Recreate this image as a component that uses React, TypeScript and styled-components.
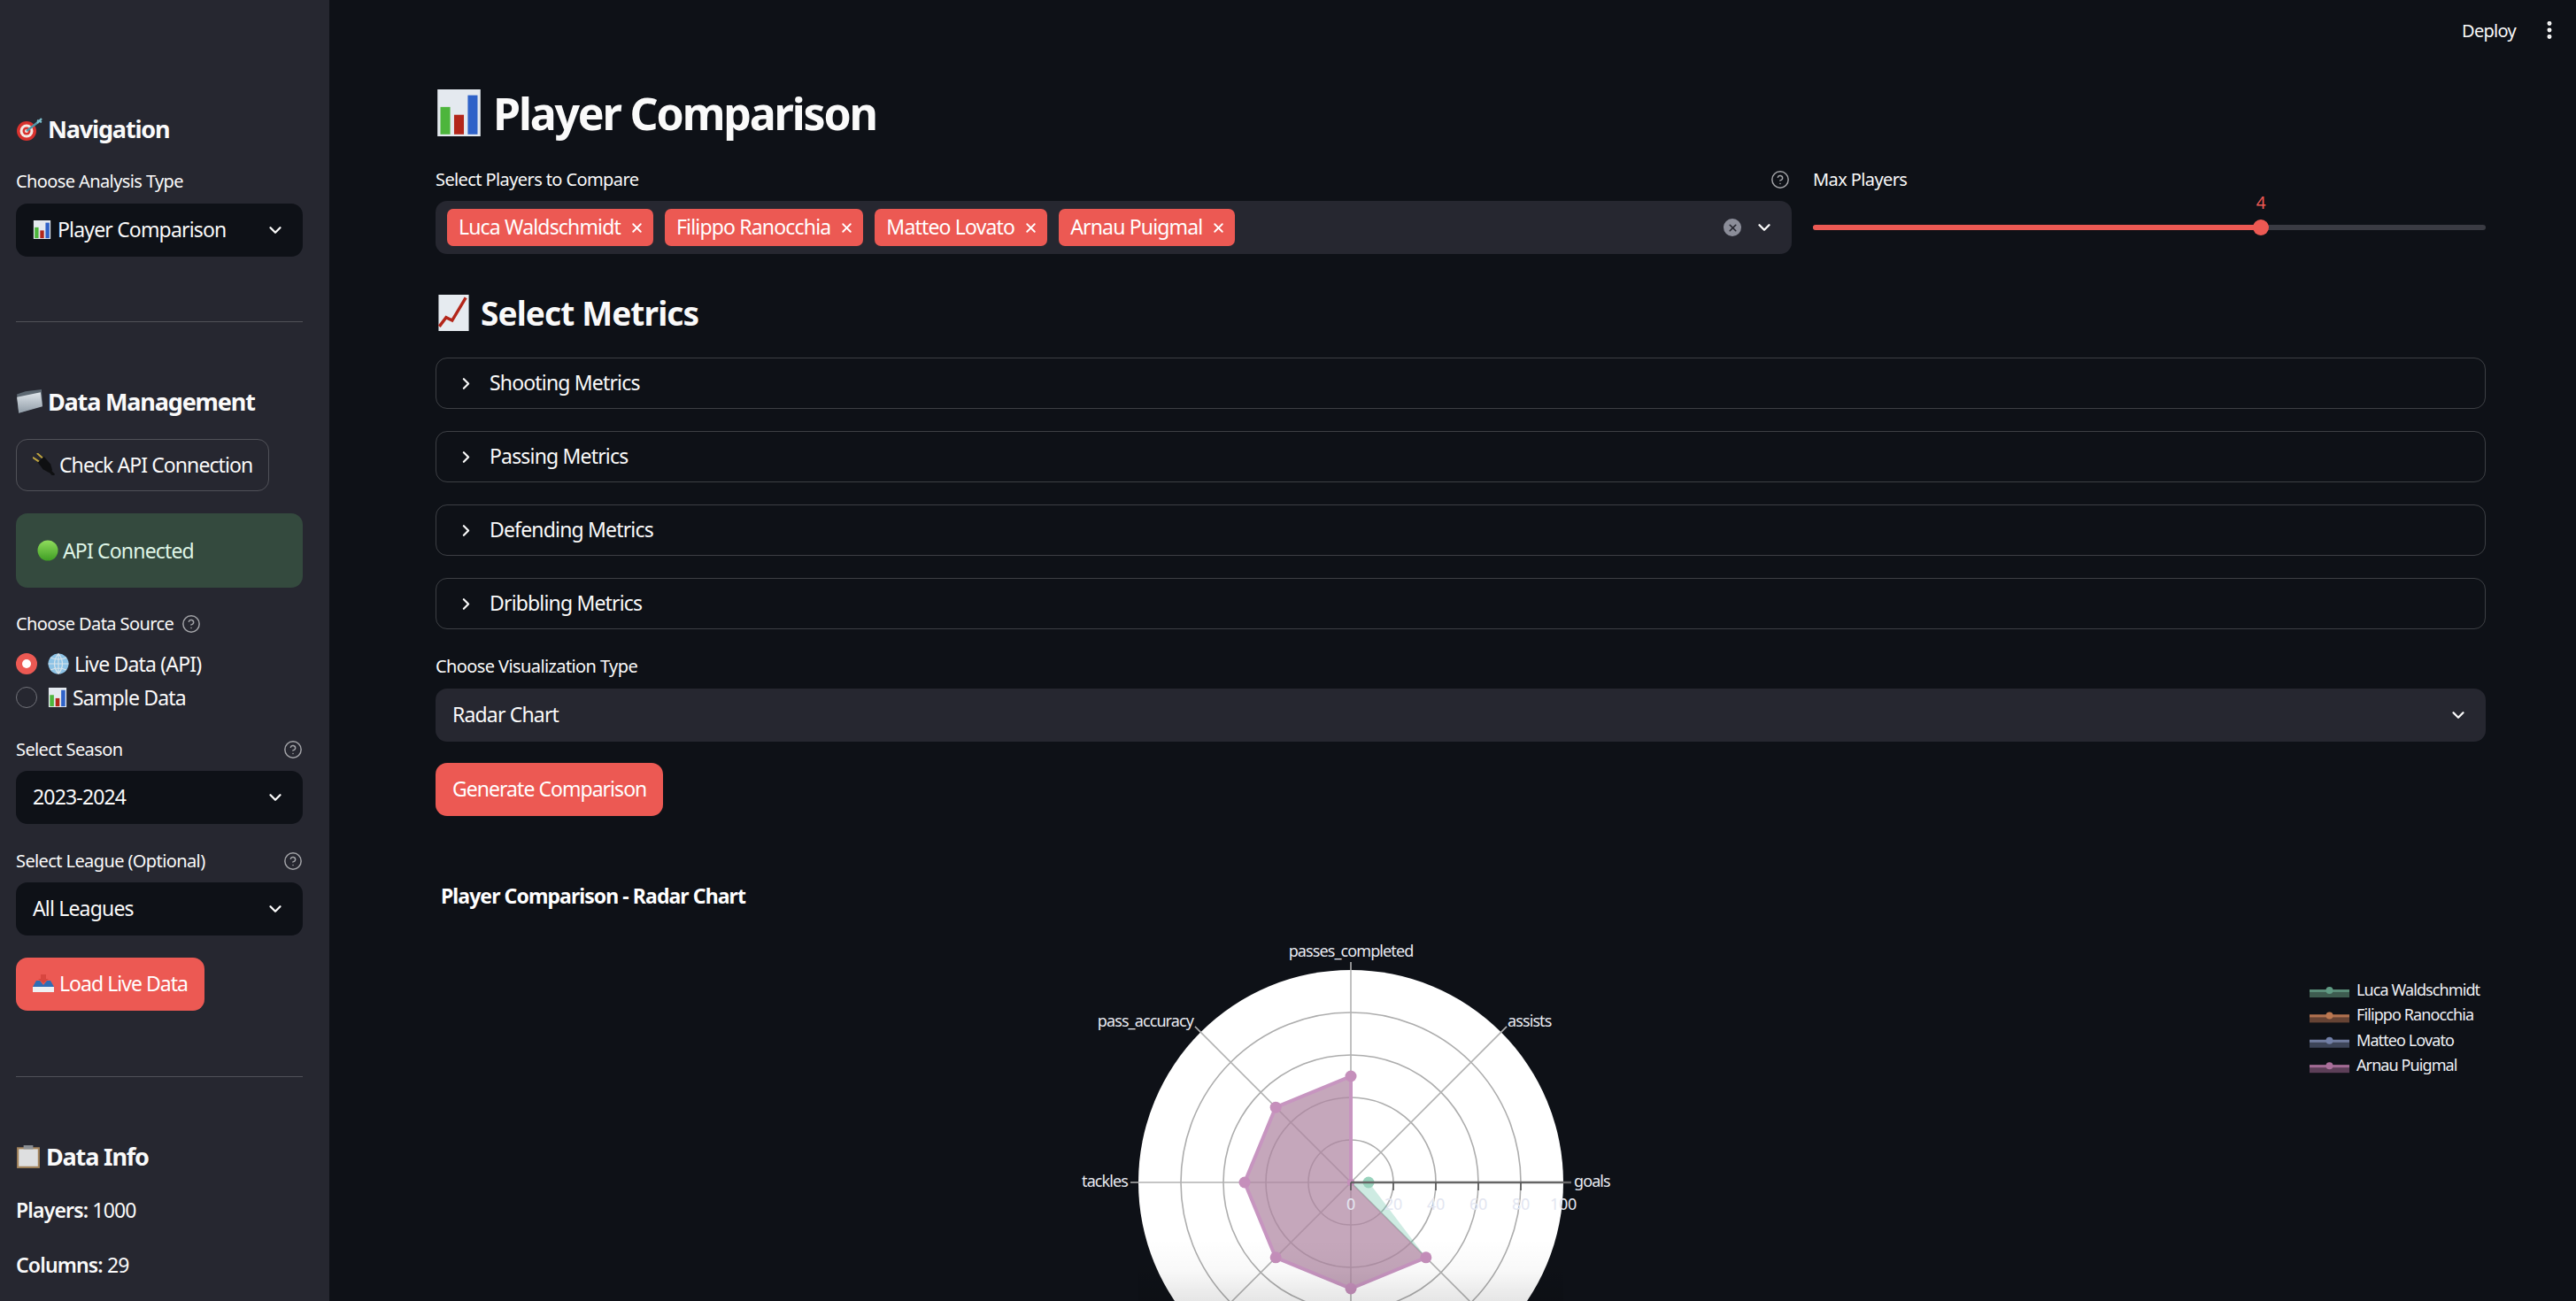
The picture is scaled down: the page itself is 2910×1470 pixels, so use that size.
import React from "react";
import styled, { createGlobalStyle } from "styled-components";
import { ChevronDown, ChevronRight, CircleHelp, EllipsisVertical, X } from "lucide-react";

const COLORS = {
  page: "#0e1117",
  panel: "#262730",
  text: "#fafafa",
  red: "#ec5953",
  line: "rgba(250,250,250,0.2)",
};

const FONT = `"Noto Sans", "Open Sans", sans-serif`;
const TIGHT = "-0.036em";

const GlobalStyle = createGlobalStyle`
  html, body { margin: 0; padding: 0; background: ${COLORS.page}; }
  body { font-family: ${FONT}; color: ${COLORS.text}; overflow: hidden; }
  * { box-sizing: border-box; }
`;

// little pictures standing in for the emoji in the labels
const BarsEmoji = ({ size = 24 }: { size?: number }) => (
  <svg width={size} height={size} viewBox="0 0 24 24">
    <rect x="1" y="0" width="22" height="24" fill="#e4e9ef" />
    <rect x="2.5" y="9" width="5" height="14" fill="#4db53c" />
    <rect x="9.5" y="13" width="5" height="10" fill="#b3261a" />
    <rect x="16.5" y="3" width="5" height="20" fill="#2f62c8" />
  </svg>
);

const TrendEmoji = ({ size = 24 }: { size?: number }) => (
  <svg width={size} height={size} viewBox="0 0 24 24">
    <rect x="2" y="0" width="20" height="24" fill="#e6ebf0" />
    <path d="M2.5 21 L7 15 L11 17 L20 2" fill="none" stroke="#b3261a" strokeWidth="2" />
  </svg>
);

const TargetEmoji = ({ size = 24 }: { size?: number }) => (
  <svg width={size} height={size} viewBox="0 0 30 26">
    <circle cx="12" cy="15" r="11" fill="#d8322e" />
    <circle cx="12" cy="15" r="7.5" fill="#f4e9e4" />
    <circle cx="12" cy="15" r="4.5" fill="#d8322e" />
    <circle cx="12" cy="15" r="2" fill="#f4e9e4" />
    <path d="M12 15 L25 5" stroke="#4f97a8" strokeWidth="2.4" />
    <path d="M24 6 L29 1 M24 3 L29 5" stroke="#7cc0cf" strokeWidth="2.4" />
  </svg>
);

const FolderEmoji = ({ size = 24 }: { size?: number }) => (
  <svg width={size} height={size} viewBox="0 0 28 26">
    <defs>
      <linearGradient id="folderFill" x1="0" y1="0" x2="0" y2="1">
        <stop offset="0" stopColor="#dfe5ea" />
        <stop offset="1" stopColor="#8f9ba6" />
      </linearGradient>
    </defs>
    <path d="M1 5 L10 2 L27 0 L28 17 L3 25 Z" fill="#5d6872" />
    <path d="M1 8 L26 3 L28 18 L3 25 Z" fill="url(#folderFill)" />
  </svg>
);

const PlugEmoji = ({ size = 24 }: { size?: number }) => (
  <svg width={size} height={size} viewBox="0 0 26 26">
    <path d="M0 5 L9 11 M5 0 L13 7" stroke="#c2a63f" strokeWidth="2" />
    <path d="M6 11 L13 4 L21 13 L23 20 L19 23 L12 19 Z" fill="#0f1012" />
    <path d="M20 21 L25 26" stroke="#0f1012" strokeWidth="3.4" />
  </svg>
);

const GreenDot = ({ size = 24 }: { size?: number }) => (
  <svg width={size} height={size} viewBox="0 0 24 24">
    <defs>
      <linearGradient id="dotFill" x1="0" y1="0" x2="0" y2="1">
        <stop offset="0" stopColor="#8fdc5c" />
        <stop offset="1" stopColor="#3f9e24" />
      </linearGradient>
    </defs>
    <circle cx="12" cy="12" r="11.5" fill="url(#dotFill)" />
  </svg>
);

const GlobeEmoji = ({ size = 24 }: { size?: number }) => (
  <svg width={size} height={size} viewBox="0 0 24 24">
    <circle cx="12" cy="12" r="11.5" fill="#8dc3e6" />
    <path
      d="M12 .5 V23.5 M.5 12 H23.5 M3 5 Q12 9 21 5 M3 19 Q12 15 21 19 M12 .5 Q3 12 12 23.5 M12 .5 Q21 12 12 23.5"
      fill="none"
      stroke="#d9e4ea"
      strokeWidth="1.2"
    />
  </svg>
);

const InboxEmoji = ({ size = 24 }: { size?: number }) => (
  <svg width={size} height={size} viewBox="0 0 24 24">
    <path d="M9 2 H15 V7 H18 L12 12 L6 7 H9 Z" fill="#d8463f" />
    <path d="M4 9 H8 L12 14 L16 9 H20 L24 16 H0 Z" fill="#2f6db5" />
    <rect x="0" y="16" width="24" height="6" fill="#eef1f4" />
  </svg>
);

const ClipboardEmoji = ({ size = 24 }: { size?: number }) => (
  <svg width={size} height={size} viewBox="0 0 26 26">
    <rect x="1" y="3" width="24" height="22" fill="#a4845c" />
    <rect x="3" y="5" width="20" height="18" fill="#dedfe0" />
    <rect x="8" y="1" width="10" height="4" fill="#8b8f94" />
  </svg>
);

type Trace = { name: string; line: string; band: string; dot: string };

const TRACES: Trace[] = [
  { name: "Luca Waldschmidt", line: "#5a8c78", band: "#3e5c50", dot: "#5f9a83" },
  { name: "Filippo Ranocchia", line: "#b0714f", band: "#664334", dot: "#bb7750" },
  { name: "Matteo Lovato", line: "#6f7b9d", band: "#3d4558", dot: "#717fa6" },
  { name: "Arnau Puigmal", line: "#a26b94", band: "#5c3f58", dot: "#aa6f9b" },
];

const CX = 1034;
const CY = 356;
const OUTER = 240;
const RINGS = [20, 40, 60, 80];
const TICKS = [0, 20, 40, 60, 80, 100];
// clockwise from goals, in plot order
const SPOKES = [0, -45, -90, -135, 180, 135, 90, 45];
const PINK_VALUES = [0, 0, 50, 50, 50, 50, 50, 50];
const GREEN_VALUES = [8.5, 0, 0, 0, 0, 0, 0, 50];
const MAX_PLAYERS_PCT = 66.6;

const toRad = (deg: number) => (deg * Math.PI) / 180;
const polar = (deg: number, r: number) => ({
  x: CX + r * Math.cos(toRad(deg)),
  y: CY + r * Math.sin(toRad(deg)),
});
const pointsOf = (values: number[]) =>
  values.map((v, i) => polar(SPOKES[i], (v / 100) * OUTER));
const asPath = (values: number[]) =>
  pointsOf(values)
    .map((p) => `${p.x.toFixed(1)},${p.y.toFixed(1)}`)
    .join(" ");

const RadarChart: React.FC = () => (
  <ChartFrame viewBox="0 0 2316 490" width="2316" height="490">
    <defs>
      <linearGradient id="bottomFade" x1="0" y1="0" x2="0" y2="1">
        <stop offset="0" stopColor="#000" stopOpacity="0" />
        <stop offset="0.5" stopColor="#000" stopOpacity="0.025" />
        <stop offset="1" stopColor="#000" stopOpacity="0.1" />
      </linearGradient>
    </defs>
    <ChartTitle x="6" y="41">Player Comparison - Radar Chart</ChartTitle>
    <circle cx={CX} cy={CY} r={OUTER} fill="#fff" />
    {RINGS.map((v) => (
      <circle key={v} cx={CX} cy={CY} r={(v / 100) * OUTER} fill="none" stroke="#adadad" strokeWidth="1.6" />
    ))}
    {SPOKES.map((deg) => {
      const end = polar(deg, OUTER + (deg === 0 ? 0 : 9));
      return <line key={deg} x1={CX} y1={CY} x2={end.x} y2={end.y} stroke="#b2b2b2" strokeWidth="1.6" />;
    })}
    <polygon points={asPath(GREEN_VALUES)} fill="rgba(102,194,165,0.32)" stroke="none" />
    <polygon points={asPath(PINK_VALUES)} fill="rgba(174,133,161,0.72)" stroke="none" />
    {/* the trace is left open: no outline from the last point back to goals */}
    <polyline points={asPath(PINK_VALUES)} fill="none" stroke="#c795c0" strokeWidth="4" strokeLinejoin="round" />
    <circle cx={CX + 20} cy={CY} r="6.5" fill="#99d3bd" />
    {pointsOf(PINK_VALUES).map((p, i) => (
      <circle key={i} cx={p.x} cy={p.y} r={i < 2 ? 4 : 6.5} fill="#c58fbb" />
    ))}
    <line x1={CX} y1={CY} x2={CX + OUTER + 9} y2={CY} stroke="#666" strokeWidth="2.4" />
    {TICKS.slice(0, 5).map((v) => {
      const x = CX + (v / 100) * OUTER;
      return <line key={v} x1={x} y1={CY} x2={x} y2={CY + 9} stroke="#555" strokeWidth="1.6" />;
    })}
    {TICKS.map((v) => (
      <TickLabel key={v} x={CX + (v / 100) * OUTER} y={CY + 31}>{v}</TickLabel>
    ))}
    <AxisLabel x={CX} y={101} textAnchor="middle">passes_completed</AxisLabel>
    <AxisLabel x={856} y={180} textAnchor="end">pass_accuracy</AxisLabel>
    <AxisLabel x={1211} y={180}>assists</AxisLabel>
    <AxisLabel x={782} y={361} textAnchor="end">tackles</AxisLabel>
    <AxisLabel x={1286} y={361}>goals</AxisLabel>
    <rect x={CX - OUTER} y={420} width={OUTER * 2} height={70} fill="url(#bottomFade)" />
    {TRACES.map((t, i) => {
      const y = 139 + i * 28.4;
      return (
        <g key={t.name}>
          <rect x="2117" y={y - 1} width="45" height="9" fill={t.band} />
          <rect x="2117" y={y - 1} width="45" height="3" fill={t.line} />
          <circle cx="2139.5" cy={y} r="4" fill={t.dot} />
          <LegendText x="2170" y={y + 6}>{t.name}</LegendText>
        </g>
      );
    })}
  </ChartFrame>
);

const App: React.FC = () => (
  <>
    <GlobalStyle />
    <Page>
      <Sidebar>
        <SideHeading $mt={126}><TargetEmoji size={30} />Navigation</SideHeading>
        <Label $mt={25}>Choose Analysis Type</Label>
        <DarkSelect $mt={11}>
          <SelectValue><BarsEmoji size={21} />Player Comparison</SelectValue>
          <ChevronDown size={22} strokeWidth={2.5} />
        </DarkSelect>
        <Divider $mt={73} />
        <SideHeading $mt={70}><FolderEmoji size={30} />Data Management</SideHeading>
        <OutlineButton $mt={22}><PlugEmoji size={25} />Check API Connection</OutlineButton>
        <SuccessBox $mt={25}><GreenDot size={24} />API Connected</SuccessBox>
        <Label $mt={27}>
          Choose Data Source
          <HelpIcon size={22} strokeWidth={1.6} $gap={9} />
        </Label>
        <RadioRow $mt={16}>
          <RadioDot $on />
          <RadioText><GlobeEmoji size={24} />Live Data (API)</RadioText>
        </RadioRow>
        <RadioRow $mt={8}>
          <RadioDot />
          <RadioText><BarsEmoji size={22} />Sample Data</RadioText>
        </RadioRow>
        <SplitLabel $mt={30}>
          Select Season
          <HelpIcon size={22} strokeWidth={1.6} />
        </SplitLabel>
        <DarkSelect $mt={10}>
          <SelectValue>2023-2024</SelectValue>
          <ChevronDown size={22} strokeWidth={2.5} />
        </DarkSelect>
        <SplitLabel $mt={28}>
          Select League (Optional)
          <HelpIcon size={22} strokeWidth={1.6} />
        </SplitLabel>
        <DarkSelect $mt={10}>
          <SelectValue>All Leagues</SelectValue>
          <ChevronDown size={22} strokeWidth={2.5} />
        </DarkSelect>
        <PrimaryButton $mt={25}><InboxEmoji size={24} />Load Live Data</PrimaryButton>
        <Divider $mt={74} />
        <SideHeading $mt={70}><ClipboardEmoji size={28} />Data Info</SideHeading>
        <InfoLine $mt={27}><strong>Players:</strong> 1000</InfoLine>
        <InfoLine $mt={34}><strong>Columns:</strong> 29</InfoLine>
      </Sidebar>
      <Main>
        <TopBar>
          <DeployText>Deploy</DeployText>
          <EllipsisVertical size={26} strokeWidth={2.6} />
        </TopBar>
        <Content>
          <PageTitle><BarsEmoji size={53} />Player Comparison</PageTitle>
          <FiltersRow>
            <div>
              <PlayersLabel>
                Select Players to Compare
                <HelpIcon size={22} strokeWidth={1.6} />
              </PlayersLabel>
              <MultiSelect>
                <Tags>
                  {["Luca Waldschmidt", "Filippo Ranocchia", "Matteo Lovato", "Arnau Puigmal"].map((name) => (
                    <Tag key={name}>
                      {name}
                      <X size={17} strokeWidth={2.6} />
                    </Tag>
                  ))}
                </Tags>
                <ClearDot><X size={13} strokeWidth={3} /></ClearDot>
                <ChevronDown size={22} strokeWidth={2.5} />
              </MultiSelect>
            </div>
            <div>
              <Label>Max Players</Label>
              <SliderBox>
                <SliderValue style={{ left: `${MAX_PLAYERS_PCT}%` }}>4</SliderValue>
                <SliderTrack>
                  <SliderFill style={{ width: `${MAX_PLAYERS_PCT}%` }} />
                  <SliderThumb style={{ left: `${MAX_PLAYERS_PCT}%` }} />
                </SliderTrack>
              </SliderBox>
            </div>
          </FiltersRow>
          <SectionTitle><TrendEmoji size={41} />Select Metrics</SectionTitle>
          <Expanders>
            {["Shooting Metrics", "Passing Metrics", "Defending Metrics", "Dribbling Metrics"].map((title) => (
              <Expander key={title}>
                <ChevronRight size={21} strokeWidth={2.5} />
                {title}
              </Expander>
            ))}
          </Expanders>
          <Label $mt={28}>Choose Visualization Type</Label>
          <WideSelect>
            <SelectValue>Radar Chart</SelectValue>
            <ChevronDown size={22} strokeWidth={2.5} />
          </WideSelect>
          <PrimaryButton $mt={24}>Generate Comparison</PrimaryButton>
          <RadarChart />
        </Content>
      </Main>
    </Page>
  </>
);

export default App;

const Page = styled.div`
  display: grid;
  grid-template-columns: 372px 1fr;
  width: 2910px;
  height: 1470px;
  overflow: hidden;
`;

const Sidebar = styled.aside`
  display: flex;
  flex-direction: column;
  padding: 0 30px 0 18px;
  background: ${COLORS.panel};
  overflow: hidden;
`;

const SideHeading = styled.h3<{ $mt?: number }>`
  display: flex;
  align-items: center;
  gap: 6px;
  flex: none;
  height: 40px;
  margin: ${(p) => p.$mt ?? 0}px 0 0;
  padding-bottom: 1px;
  font-size: 27px;
  font-weight: 700;
  letter-spacing: -0.043em;
`;

const Label = styled.div<{ $mt?: number }>`
  display: flex;
  align-items: center;
  flex: none;
  height: 28px;
  margin-top: ${(p) => p.$mt ?? 0}px;
  padding-bottom: 2px;
  font-size: 20px;
  letter-spacing: -0.03em;

  svg { margin-top: 2px; }
`;

const SplitLabel = styled(Label)`
  justify-content: space-between;
`;

const PlayersLabel = styled(SplitLabel)`
  padding-right: 2px;
`;

const HelpIcon = styled(CircleHelp)<{ $gap?: number }>`
  margin-left: ${(p) => p.$gap ?? 0}px;
  color: #a3a4a8;
`;

const DarkSelect = styled.div<{ $mt?: number }>`
  display: flex;
  align-items: center;
  justify-content: space-between;
  flex: none;
  height: 60px;
  margin-top: ${(p) => p.$mt ?? 0}px;
  padding: 0 20px 0 19px;
  border-radius: 13px;
  background: ${COLORS.page};
`;

const SelectValue = styled.span`
  display: flex;
  align-items: center;
  gap: 7px;
  padding-bottom: 2px;
  font-size: 23px;
  letter-spacing: ${TIGHT};
`;

const Divider = styled.hr<{ $mt?: number }>`
  flex: none;
  width: 100%;
  height: 1px;
  margin: ${(p) => p.$mt ?? 0}px 0 0;
  border: 0;
  background: ${COLORS.line};
`;

const OutlineButton = styled.button<{ $mt?: number }>`
  display: flex;
  align-items: center;
  align-self: flex-start;
  gap: 5px;
  height: 59px;
  margin-top: ${(p) => p.$mt ?? 0}px;
  padding: 0 18px 2px;
  border: 1px solid ${COLORS.line};
  border-radius: 13px;
  background: transparent;
  color: ${COLORS.text};
  font: 400 23px ${FONT};
  letter-spacing: -0.04em;
`;

const PrimaryButton = styled.button<{ $mt?: number }>`
  display: flex;
  align-items: center;
  align-self: flex-start;
  gap: 6px;
  height: 60px;
  margin-top: ${(p) => p.$mt ?? 0}px;
  padding: 0 19px 2px;
  border: 0;
  border-radius: 13px;
  background: ${COLORS.red};
  color: #fff;
  font: 400 23px ${FONT};
  letter-spacing: -0.042em;
`;

const SuccessBox = styled.div<{ $mt?: number }>`
  display: flex;
  align-items: center;
  gap: 5px;
  flex: none;
  height: 84px;
  margin-top: ${(p) => p.$mt ?? 0}px;
  padding: 0 24px;
  border-radius: 13px;
  background: #344a3e;
  color: #dff5e6;
  font-size: 23px;
  letter-spacing: ${TIGHT};
`;

const RadioRow = styled.div<{ $mt?: number }>`
  display: flex;
  align-items: center;
  gap: 12px;
  flex: none;
  height: 30px;
  margin-top: ${(p) => p.$mt ?? 0}px;
`;

const RadioText = styled.span`
  display: flex;
  align-items: center;
  gap: 6px;
  font-size: 23px;
  letter-spacing: ${TIGHT};
`;

const RadioDot = styled.span<{ $on?: boolean }>`
  flex: none;
  width: 24px;
  height: 24px;
  border-radius: 50%;
  background: ${(p) => (p.$on ? COLORS.red : "transparent")};
  border: ${(p) => (p.$on ? "0" : "1px solid #72737a")};
  position: relative;

  &::after {
    content: "";
    display: ${(p) => (p.$on ? "block" : "none")};
    position: absolute;
    inset: 7px;
    border-radius: 50%;
    background: #fff;
  }
`;

const InfoLine = styled.p<{ $mt?: number }>`
  flex: none;
  height: 28px;
  margin: ${(p) => p.$mt ?? 0}px 0 0;
  font-size: 23px;
  line-height: 26px;
  letter-spacing: ${TIGHT};

  strong { font-weight: 600; }
`;

const Main = styled.main`
  display: flex;
  flex-direction: column;
  min-width: 0;
`;

const TopBar = styled.header`
  display: flex;
  align-items: center;
  justify-content: flex-end;
  gap: 25px;
  flex: none;
  height: 68px;
  padding-right: 17px;
`;

const DeployText = styled.span`
  font-size: 20px;
  letter-spacing: ${TIGHT};
`;

const Content = styled.div`
  display: flex;
  flex-direction: column;
  padding: 0 102px 0 120px;
`;

const PageTitle = styled.h1`
  display: flex;
  align-items: center;
  gap: 12px;
  flex: none;
  height: 70px;
  margin: 27px 0 0;
  padding-bottom: 5px;
  font-size: 50px;
  font-weight: 700;
  letter-spacing: -0.043em;
`;

const FiltersRow = styled.div`
  display: grid;
  grid-template-columns: 1532px 1fr;
  gap: 24px;
  margin-top: 24px;
`;

const MultiSelect = styled.div`
  display: flex;
  align-items: center;
  height: 60px;
  margin-top: 10px;
  padding: 0 20px 0 13px;
  border-radius: 13px;
  background: ${COLORS.panel};
`;

const Tags = styled.div`
  display: flex;
  gap: 13px;
  flex: 1;
`;

const Tag = styled.span`
  display: flex;
  align-items: center;
  gap: 10px;
  height: 42px;
  padding: 0 10px 2px 13px;
  border-radius: 7px;
  background: ${COLORS.red};
  color: #fff;
  font-size: 23px;
  letter-spacing: ${TIGHT};

  svg { margin-top: 2px; }
`;

const ClearDot = styled.span`
  display: flex;
  align-items: center;
  justify-content: center;
  width: 20px;
  height: 20px;
  margin-right: 15px;
  border-radius: 50%;
  background: #8b8d99;
  color: ${COLORS.panel};
`;

const SliderBox = styled.div`
  position: relative;
  display: flex;
  align-items: center;
  height: 60px;
  margin-top: 10px;
`;

const SliderValue = styled.span`
  position: absolute;
  top: -11px;
  transform: translateX(-50%);
  color: ${COLORS.red};
  font-size: 19px;
`;

const SliderTrack = styled.div`
  position: relative;
  width: 100%;
  height: 6px;
  border-radius: 3px;
  background: #3a3b43;
`;

const SliderFill = styled.div`
  height: 100%;
  border-radius: 3px;
  background: ${COLORS.red};
`;

const SliderThumb = styled.div`
  position: absolute;
  top: -6px;
  width: 18px;
  height: 18px;
  margin-left: -9px;
  border-radius: 50%;
  background: ${COLORS.red};
`;

const SectionTitle = styled.h2`
  display: flex;
  align-items: center;
  gap: 10px;
  flex: none;
  height: 60px;
  margin: 36px 0 0;
  font-size: 37px;
  font-weight: 700;
  letter-spacing: -0.024em;
`;

const Expanders = styled.div`
  display: flex;
  flex-direction: column;
  gap: 25px;
  margin-top: 21px;
`;

const Expander = styled.div`
  display: flex;
  align-items: center;
  gap: 16px;
  height: 58px;
  padding: 0 23px 2px;
  border: 1px solid ${COLORS.line};
  border-radius: 13px;
  font-size: 23px;
  letter-spacing: ${TIGHT};

  svg { margin-top: 2px; }
`;

const WideSelect = styled(DarkSelect)`
  margin-top: 11px;
  background: ${COLORS.panel};
`;

const ChartFrame = styled.svg`
  display: block;
  flex: none;
  margin-top: 58px;
  font-family: ${FONT};
`;

const ChartTitle = styled.text`
  fill: #fff;
  font-size: 23px;
  font-weight: 700;
  letter-spacing: -0.04em;
`;

const AxisLabel = styled.text`
  fill: #e8eaf1;
  font-size: 18px;
  letter-spacing: -0.05em;
`;

const TickLabel = styled.text`
  fill: #e3e6f1;
  font-size: 18px;
  text-anchor: middle;
  letter-spacing: -0.02em;
`;

const LegendText = styled.text`
  fill: #eef0f5;
  font-size: 18px;
  letter-spacing: -0.05em;
`;
